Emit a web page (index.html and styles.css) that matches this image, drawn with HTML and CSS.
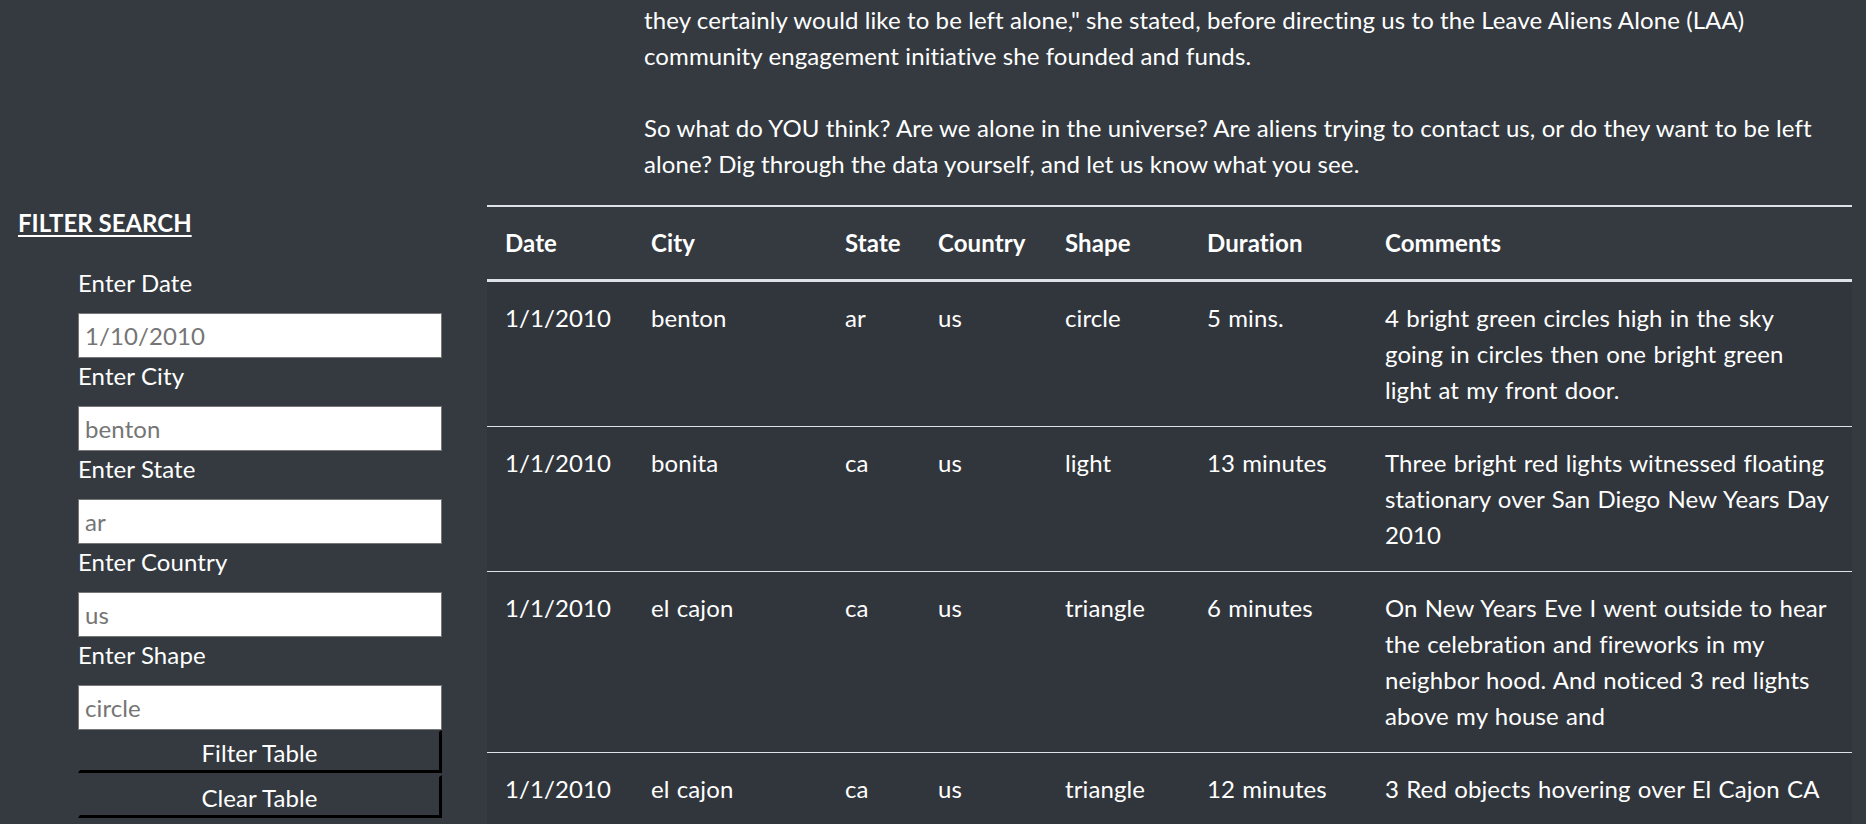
FILE: index.html
```html
<!DOCTYPE html>
<html lang="en">
<head>
<meta charset="utf-8">
<title>UFO Sightings</title>
<link rel="stylesheet" href="styles.css">
</head>
<body>
<div class="intro">
  <p>they certainly would like to be left alone," she stated, before directing us to the Leave Aliens Alone (LAA) community engagement initiative she founded and funds.<br><br>So what do YOU think? Are we alone in the universe? Are aliens trying to contact us, or do they want to be left alone? Dig through the data yourself, and let us know what you see.</p>
</div>
<div class="main">
  <aside class="sidebar">
    <h4 class="filter-title">FILTER SEARCH</h4>
    <form class="filters">
      <ul class="filter-list">
        <li class="filter">
          <label class="filter-label" for="datetime">Enter Date</label>
          <input class="filter-input" id="datetime" type="text" placeholder="1/10/2010">
        </li>
        <li class="filter">
          <label class="filter-label" for="city">Enter City</label>
          <input class="filter-input" id="city" type="text" placeholder="benton">
        </li>
        <li class="filter">
          <label class="filter-label" for="state">Enter State</label>
          <input class="filter-input" id="state" type="text" placeholder="ar">
        </li>
        <li class="filter">
          <label class="filter-label" for="country">Enter Country</label>
          <input class="filter-input" id="country" type="text" placeholder="us">
        </li>
        <li class="filter">
          <label class="filter-label" for="shape">Enter Shape</label>
          <input class="filter-input" id="shape" type="text" placeholder="circle">
        </li>
        <li class="filter-buttons">
          <button class="btn" type="button">Filter Table</button>
          <button class="btn btn-second" type="button">Clear Table</button>
        </li>
      </ul>
    </form>
  </aside>
  <div class="table-wrap">
    <table class="ufo-table">
      <thead>
        <tr>
          <th class="c-date">Date</th>
          <th class="c-city">City</th>
          <th class="c-state">State</th>
          <th class="c-country">Country</th>
          <th class="c-shape">Shape</th>
          <th class="c-duration">Duration</th>
          <th class="c-comments">Comments</th>
        </tr>
      </thead>
      <tbody>
        <tr>
          <td>1/1/2010</td><td>benton</td><td>ar</td><td>us</td><td>circle</td><td>5 mins.</td>
          <td>4 bright green circles high in the sky going in circles then one bright green light at my front door.</td>
        </tr>
        <tr>
          <td>1/1/2010</td><td>bonita</td><td>ca</td><td>us</td><td>light</td><td>13 minutes</td>
          <td>Three bright red lights witnessed floating stationary over San Diego New Years Day 2010</td>
        </tr>
        <tr>
          <td>1/1/2010</td><td>el cajon</td><td>ca</td><td>us</td><td>triangle</td><td>6 minutes</td>
          <td>On New Years Eve I went outside to hear the celebration and fireworks in my neighbor hood. And noticed 3 red lights above my house and</td>
        </tr>
        <tr>
          <td>1/1/2010</td><td>el cajon</td><td>ca</td><td>us</td><td>triangle</td><td>12 minutes</td>
          <td>3 Red objects hovering over El Cajon CA</td>
        </tr>
      </tbody>
    </table>
  </div>
</div>
</body>
</html>
```
FILE: styles.css
```css
* { box-sizing: border-box; }

html, body {
  margin: 0;
  padding: 0;
}

body {
  background: #343a40;
  color: #ffffff;
  font-family: Lato, "Liberation Sans", sans-serif;
  font-size: 24px;
  line-height: 36px;
  letter-spacing: 0.1px;
  overflow: hidden;
}

.intro {
  padding: 2px 14px 0 644px;
}

.intro p {
  margin: 0 0 23px 0;
}

.main {
  display: flex;
  align-items: flex-start;
}

.sidebar {
  flex: 0 0 487px;
  padding-left: 18px;
}

.filter-title {
  margin: 0 0 24px 0;
  font-size: 24px;
  line-height: 36px;
  font-weight: 700;
  text-decoration: underline;
  text-underline-offset: 3px;
  letter-spacing: 0;
}

.filters {
  margin: 0;
}

.filter-list {
  list-style: none;
  margin: 0;
  padding: 0 0 0 60px;
}

.filter {
  display: block;
}

.filter-label {
  display: block;
  margin-bottom: 12px;
}

.filter-input {
  display: block;
  width: 364px;
  height: 45px;
  margin: 0;
  padding: 0 6px;
  border: 1px solid #767676;
  background: #ffffff;
  color: #333;
  font-family: inherit;
  font-size: 24px;
  letter-spacing: 0.1px;
}

.filter-input::placeholder {
  color: #757575;
}

.btn {
  display: block;
  width: 364px;
  height: 43px;
  margin: 0;
  padding: 3px 0 0;
  background: #343a40;
  color: #ffffff;
  font-family: inherit;
  font-size: 24px;
  line-height: 36px;
  letter-spacing: 0.1px;
  border-style: solid;
  border-width: 2px 3px 3px 2px;
  border-color: #343a40 #000000 #000000 #343a40;
}

.btn-second {
  margin-top: 2px;
}

.table-wrap {
  flex: 1 1 auto;
  margin-right: 14px;
}

.ufo-table {
  width: 100%;
  table-layout: fixed;
  border-collapse: collapse;
  color: #ffffff;
}

.ufo-table th,
.ufo-table td {
  padding: 18px;
  text-align: left;
  vertical-align: top;
}

.ufo-table th {
  font-weight: 700;
  border-top: 2px solid #dee2e6;
  border-bottom: 3px solid #dee2e6;
}

.ufo-table td {
  border-top: 1px solid #dee2e6;
  word-spacing: 1px;
}

.ufo-table tbody tr {
  background: #31363c;
}

.c-date { width: 146px; }
.c-city { width: 194px; }
.c-state { width: 93px; }
.c-country { width: 127px; }
.c-shape { width: 142px; }
.c-duration { width: 178px; }
.c-comments { width: 485px; }
```
